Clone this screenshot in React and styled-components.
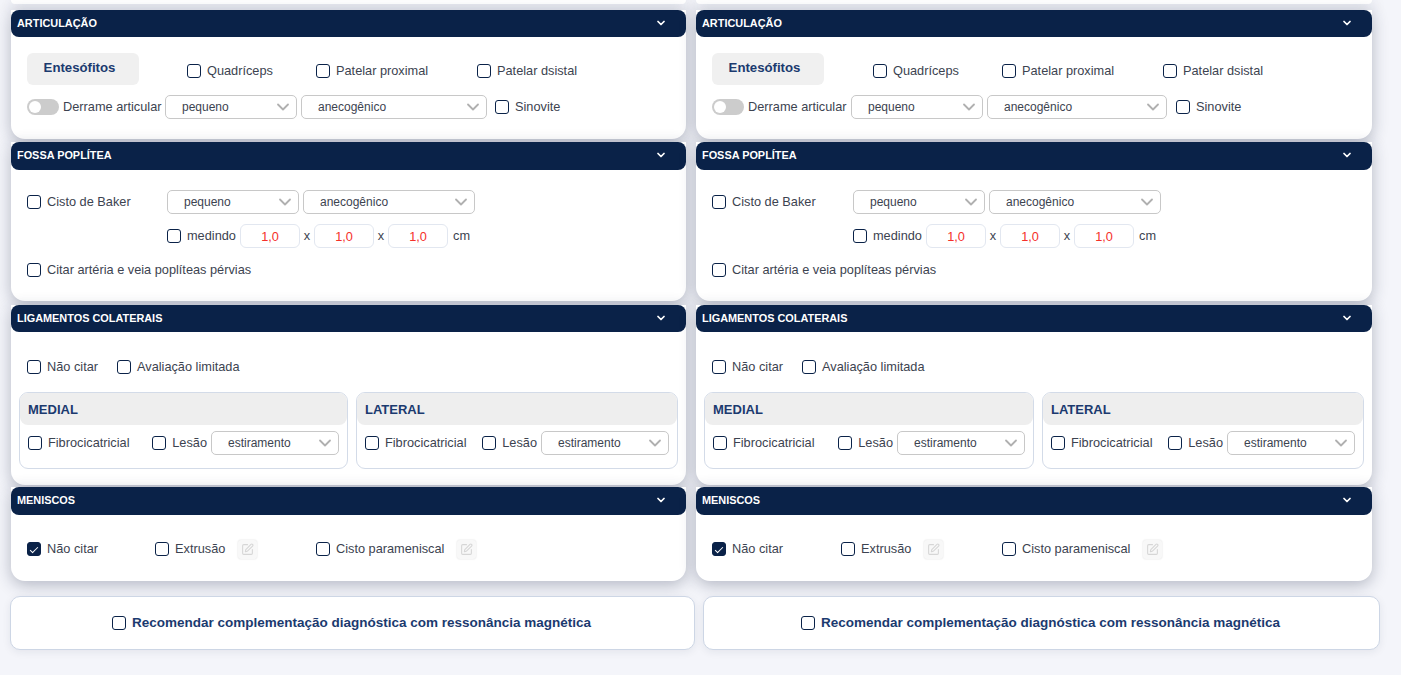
import React from 'react';
import styled, { createGlobalStyle } from 'styled-components';
import { ChevronDown, SquarePen } from 'lucide-react';

const GlobalStyle = createGlobalStyle`
  html, body {
    margin: 0;
    padding: 0;
    background: #f4f5fa;
    overflow: hidden;
  }
  body {
    font-family: "Liberation Sans", Arial, sans-serif;
    font-size: 12.75px;
    line-height: 14px;
    color: #3c4350;
  }
`;

const Page = styled.div`
  height: 675px;
  background: #f4f5fa;
`;

const Columns = styled.div`
  display: grid;
  grid-template-columns: 675px 676px;
  column-gap: 10px;
  padding-left: 11px;
`;

const Column = styled.div`
  display: flex;
  flex-direction: column;
`;

const Card = styled.section`
  background: #fff;
  border-radius: 0 0 14px 14px;
  box-shadow: 0 4px 16px rgba(30, 40, 70, 0.3);
  margin-top: ${(p) => p.$top || 0}px;
`;

const TopStub = styled(Card)`
  height: 4px;
`;

const Header = styled.header`
  display: flex;
  align-items: center;
  justify-content: space-between;
  box-sizing: border-box;
  height: ${(p) => (p.$tall ? 28 : 27)}px;
  padding: 0 19px ${(p) => (p.$tall ? 2 : 1)}px 6px;
  background: #0a2248;
  border-radius: 8px;
  color: #fff;
  font-size: 10.9px;
  font-weight: 700;
`;

const Body = styled.div`
  display: flex;
  flex-direction: column;
  gap: 10px;
  padding: ${(p) => p.$pad || '16px 8px 20px 16px'};
`;

const Row = styled.div`
  display: flex;
  align-items: center;
  gap: ${(p) => p.$gap || 0}px;
  min-height: 24px;
  padding-left: ${(p) => p.$indent || 0}px;
`;

const Chip = styled.div`
  width: 112px;
  height: 32px;
  margin-right: ${(p) => p.$after}px;
  padding: 8px 7px 0 0;
  box-sizing: border-box;
  background: #f0f0f0;
  border-radius: 6px;
  color: #1b3a6f;
  font-size: 13.2px;
  font-weight: 700;
  text-align: center;
`;

const Field = styled.label`
  display: flex;
  align-items: center;
  gap: 6px;
  flex: none;
  width: ${(p) => (p.$w ? `${p.$w}px` : 'auto')};
  margin-top: ${(p) => p.$lift || 0}px;
  white-space: nowrap;
`;

const Tick = styled.input.attrs({ type: 'checkbox' })`
  appearance: none;
  position: relative;
  flex: none;
  box-sizing: border-box;
  width: 14px;
  height: 14px;
  margin: 0;
  border: 1px solid #0a2248;
  border-radius: 3px;
  background: #fff;

  &:checked {
    background: #0a2248;
  }
  &:checked::after {
    content: '';
    position: absolute;
    left: 4px;
    top: 1.5px;
    width: 3px;
    height: 7px;
    border: solid #fff;
    border-width: 0 1.2px 1.2px 0;
    transform: rotate(45deg);
  }
`;

const Toggle = styled.span`
  position: relative;
  flex: none;
  width: 32px;
  height: 16px;
  margin-right: 4px;
  border-radius: 8px;
  background: #cccccc;

  &::after {
    content: '';
    position: absolute;
    left: 2px;
    top: 2px;
    width: 12px;
    height: 12px;
    border-radius: 50%;
    background: #fff;
  }
`;

const ToggleLabel = styled.span`
  flex: none;
  width: ${(p) => p.$w}px;
  white-space: nowrap;
`;

const SelectWrap = styled.div`
  position: relative;
  flex: none;
  width: ${(p) => p.$w}px;
  height: 24px;
  margin: ${(p) => p.$margin || 0};

  svg {
    position: absolute;
    right: 4px;
    top: 2px;
    color: #b0b0b0;
    pointer-events: none;
  }
`;

const NativeSelect = styled.select`
  appearance: none;
  width: 100%;
  height: 100%;
  padding: 0 0 0 16px;
  border: 1px solid #c8c8c8;
  border-radius: 5px;
  background: #fff;
  color: #3c4350;
  font-family: inherit;
  font-size: 12px;
`;

const NumberBox = styled.input`
  box-sizing: border-box;
  width: 60px;
  height: 24px;
  padding: 0;
  border: 1px solid #e2e7f0;
  border-radius: 6px;
  color: #f5302a;
  font-family: inherit;
  font-size: 12.75px;
  text-align: center;
`;

const Times = styled.span`
  width: 14px;
  text-align: center;
`;

const Unit = styled.span`
  margin-left: 5px;
`;

const Panels = styled.div`
  display: grid;
  grid-template-columns: ${(p) => p.$first}px 322px;
  column-gap: ${(p) => p.$gap}px;
  margin: 3px 0 0 -8px;
`;

const Panel = styled.div`
  height: 77px;
  box-sizing: border-box;
  border: 1px solid #d3dbe8;
  border-radius: 9px;
`;

const PanelTitle = styled.div`
  height: 32px;
  padding-left: 8px;
  background: #eeeeee;
  border-radius: 8px;
  color: #1b3a6f;
  font-size: 13px;
  font-weight: 700;
  line-height: 33px;
`;

const PanelRow = styled.div`
  display: flex;
  align-items: center;
  justify-content: space-between;
  height: 24px;
  margin-top: 6px;
  padding: 0 8px;
`;

const EditButton = styled.button`
  display: flex;
  align-items: center;
  justify-content: center;
  flex: none;
  width: 19px;
  height: 19px;
  margin-right: ${(p) => p.$after || 0}px;
  padding: 0;
  border: 0;
  border-radius: 3px;
  background: #f8f8f8;
  box-shadow: 0 0 2px rgba(0, 0, 0, 0.14);
  color: #d6d6d6;
`;

const FooterRow = styled.div`
  display: flex;
  gap: 8px;
  margin-top: 15px;
  padding-left: 10px;
`;

const FooterCard = styled.label`
  display: flex;
  align-items: center;
  justify-content: center;
  gap: 6px;
  box-sizing: border-box;
  width: ${(p) => p.$w}px;
  height: 54px;
  padding-right: 2px;
  background: #fff;
  border: 1px solid #cdd6e5;
  border-radius: 10px;
  box-shadow: 0 2px 8px rgba(30, 40, 70, 0.08);
  color: #1b3a6f;
  font-size: 13.5px;
  font-weight: 700;
`;

const Select = ({ w, value, margin }) => (
  <SelectWrap $w={w} $margin={margin}>
    <NativeSelect defaultValue={value}>
      <option>{value}</option>
    </NativeSelect>
    <ChevronDown size={20} strokeWidth={2.2} />
  </SelectWrap>
);

const Check = ({ label, w, checked, lift }) => (
  <Field $w={w} $lift={lift}>
    <Tick defaultChecked={checked} />
    {label}
  </Field>
);

const SectionHead = ({ title, tall }) => (
  <Header $tall={tall}>
    {title}
    <ChevronDown size={12} strokeWidth={3.5} />
  </Header>
);

const LigamentPanel = ({ title }) => (
  <Panel>
    <PanelTitle>{title}</PanelTitle>
    <PanelRow>
      <Check label="Fibrocicatricial" />
      <Row $gap={4}>
        <Check label="Lesão" />
        <Select w={128} value="estiramento" />
      </Row>
    </PanelRow>
  </Panel>
);

// the right column sits half a pixel over in the original, hence nudge
const KneeColumn = ({ firstPanel, panelGap, effusionWidth, nudge }) => (
  <Column>
    <TopStub />
    <Card $top={6}>
      <SectionHead title="ARTICULAÇÃO" />
      <Body>
        <Row>
          <Chip $after={48 + nudge}>Entesófitos</Chip>
          <Check label="Quadríceps" w={129} lift={4} />
          <Check label="Patelar proximal" w={161} lift={4} />
          <Check label="Patelar dsistal" lift={4} />
        </Row>
        <Row>
          <Toggle />
          <ToggleLabel $w={98 + nudge}>Derrame articular</ToggleLabel>
          <Select w={132} value="pequeno" margin="0 4px 0 4px" />
          <Select w={effusionWidth} value="anecogênico" margin={`0 ${8 + nudge}px 0 0`} />
          <Check label="Sinovite" />
        </Row>
      </Body>
    </Card>

    <Card $top={3}>
      <SectionHead title="FOSSA POPLÍTEA" tall />
      <Body $pad="20px 8px 19px 16px">
        <Row>
          <Check label="Cisto de Baker" w={140 + nudge} />
          <Select w={132} value="pequeno" margin="0 4px 0 0" />
          <Select w={172} value="anecogênico" />
        </Row>
        <Row $indent={140 + nudge}>
          <Check label="medindo" w={73} />
          <NumberBox defaultValue="1,0" />
          <Times>x</Times>
          <NumberBox defaultValue="1,0" />
          <Times>x</Times>
          <NumberBox defaultValue="1,0" />
          <Unit>cm</Unit>
        </Row>
        <Row>
          <Check label="Citar artéria e veia poplíteas pérvias" />
        </Row>
      </Body>
    </Card>

    <Card $top={4}>
      <SectionHead title="LIGAMENTOS COLATERAIS" />
      <Body $pad="23px 8px 16px 16px">
        <Row>
          <Check label="Não citar" w={90} />
          <Check label="Avaliação limitada" />
        </Row>
        <Panels $first={firstPanel} $gap={panelGap}>
          <LigamentPanel title="MEDIAL" />
          <LigamentPanel title="LATERAL" />
        </Panels>
      </Body>
    </Card>

    <Card $top={2}>
      <SectionHead title="MENISCOS" tall />
      <Body $pad="22px 8px 20px 16px">
        <Row>
          <Check label="Não citar" w={128 + nudge} checked />
          <Check label="Extrusão" w={83} />
          <EditButton aria-label="editar extrusão" $after={59}>
            <SquarePen size={13} />
          </EditButton>
          <Check label="Cisto parameniscal" w={141} />
          <EditButton aria-label="editar cisto">
            <SquarePen size={13} />
          </EditButton>
        </Row>
      </Body>
    </Card>
  </Column>
);

const App = () => (
  <Page>
    <GlobalStyle />
    <Columns>
      <KneeColumn firstPanel={329} panelGap={8} effusionWidth={186} nudge={0} />
      <KneeColumn firstPanel={330} panelGap={8} effusionWidth={180} nudge={1} />
    </Columns>
    <FooterRow>
      <FooterCard $w={685}>
        <Tick />
        Recomendar complementação diagnóstica com ressonância magnética
      </FooterCard>
      <FooterCard $w={677}>
        <Tick />
        Recomendar complementação diagnóstica com ressonância magnética
      </FooterCard>
    </FooterRow>
  </Page>
);

export default App;
